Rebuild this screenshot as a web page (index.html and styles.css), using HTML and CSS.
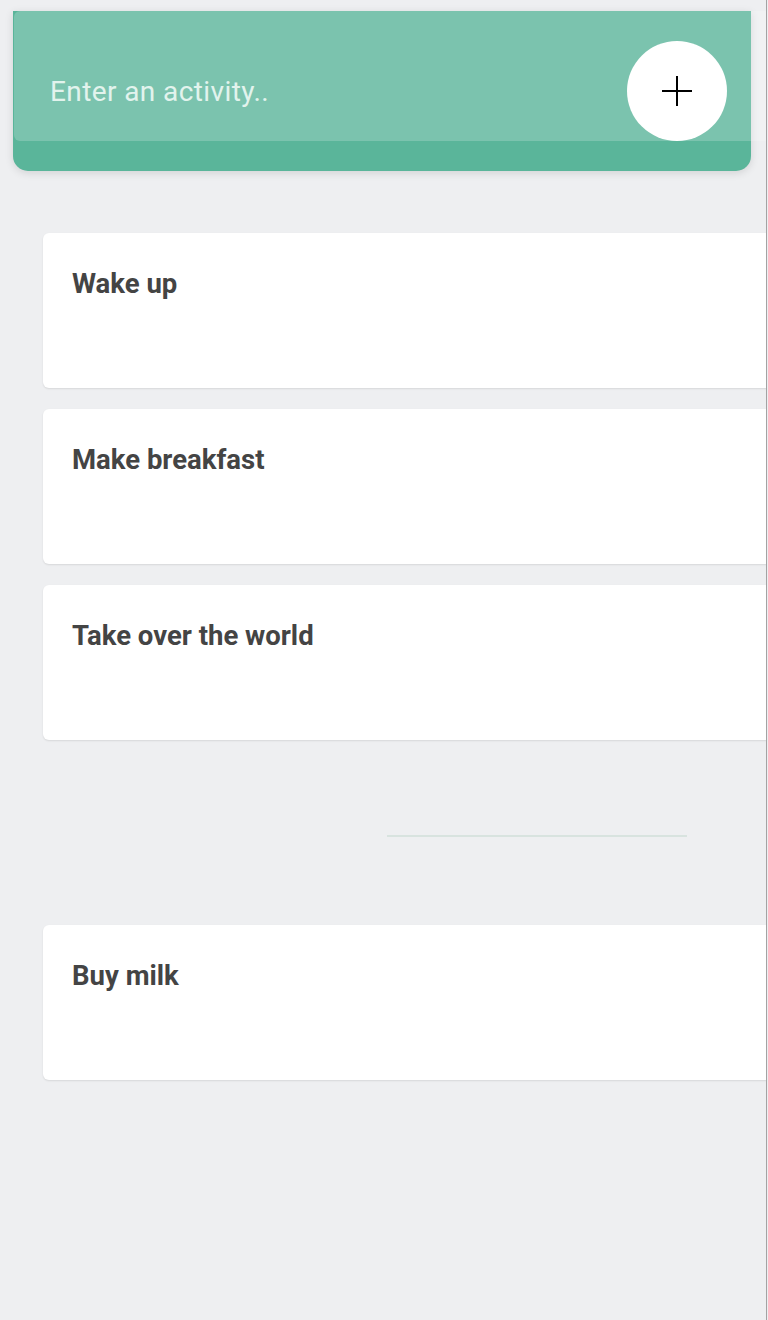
FILE: index.html
```html
<!DOCTYPE html>
<html lang="en">
<head>
<meta charset="utf-8">
<title>Todo</title>
<link rel="stylesheet" href="styles.css">
</head>
<body>
<div class="page">
  <header class="header">
    <input class="activity-input" type="text" placeholder="Enter an activity..">
    <button class="add-btn" type="button" aria-label="Add">
      <svg width="32" height="32" viewBox="0 0 32 32"><path d="M16 1V31M1 16H31" stroke="#000" stroke-width="2" fill="none"/></svg>
    </button>
  </header>
  <ul class="list">
    <li class="card"><h2 class="card-title">Wake up</h2></li>
    <li class="card"><h2 class="card-title">Make breakfast</h2></li>
    <li class="card"><h2 class="card-title">Take over the world</h2></li>
  </ul>
  <hr class="divider">
  <ul class="list done">
    <li class="card"><h2 class="card-title">Buy milk</h2></li>
  </ul>
</div>
</body>
</html>
```
FILE: styles.css
```css
html, body {
  margin: 0;
  padding: 0;
  background: #eeeff1;
}
body {
  font-family: Roboto, "Liberation Sans", Arial, sans-serif;
}
.page {
  width: 767px;
  min-height: 1320px;
  border-right: 1px solid #a3a3a3;
  overflow: hidden;
  padding-top: 11px;
  box-sizing: border-box;
}
.header {
  position: relative;
  margin-left: 13px;
  width: 738px;
  height: 160px;
  background: #5ab59a;
  border-radius: 0 0 15px 15px;
  box-shadow: 0 2px 8px rgba(0, 0, 0, 0.12);
}
.activity-input {
  display: block;
  margin: 0 0 0 1px;
  width: 753px;
  height: 130px;
  box-sizing: border-box;
  border: none;
  outline: none;
  border-radius: 6px 0 0 6px;
  background: rgba(255, 255, 255, 0.2);
  padding: 30px 0 0 36px;
  font-family: Roboto, "Liberation Sans", Arial, sans-serif;
  font-size: 28px;
  letter-spacing: 0.4px;
  color: #fff;
}
.activity-input::placeholder {
  color: #e2f3ed;
  opacity: 1;
}
.add-btn {
  position: absolute;
  left: 614px;
  top: 30px;
  width: 100px;
  height: 100px;
  border-radius: 50%;
  border: none;
  background: #fff;
  padding: 0;
  display: flex;
  align-items: center;
  justify-content: center;
  cursor: pointer;
}
.list {
  list-style: none;
  margin: 62px 0 0 43px;
  padding: 0;
  display: flex;
  flex-direction: column;
  gap: 21px;
}
.card {
  width: 760px;
  height: 155px;
  box-sizing: border-box;
  background: #fff;
  border-radius: 6px;
  box-shadow: 0 1px 2px rgba(0, 0, 0, 0.1);
  padding: 35px 0 0 29px;
}
.card-title {
  margin: 0;
  font-size: 27.5px;
  font-weight: 700;
  color: #444;
  line-height: 32px;
}
.divider {
  margin: 95px 0 0 387px;
  width: 300px;
  height: 2px;
  border: none;
  background: #d8e3df;
}
.done {
  margin-top: 88px;
}
```
